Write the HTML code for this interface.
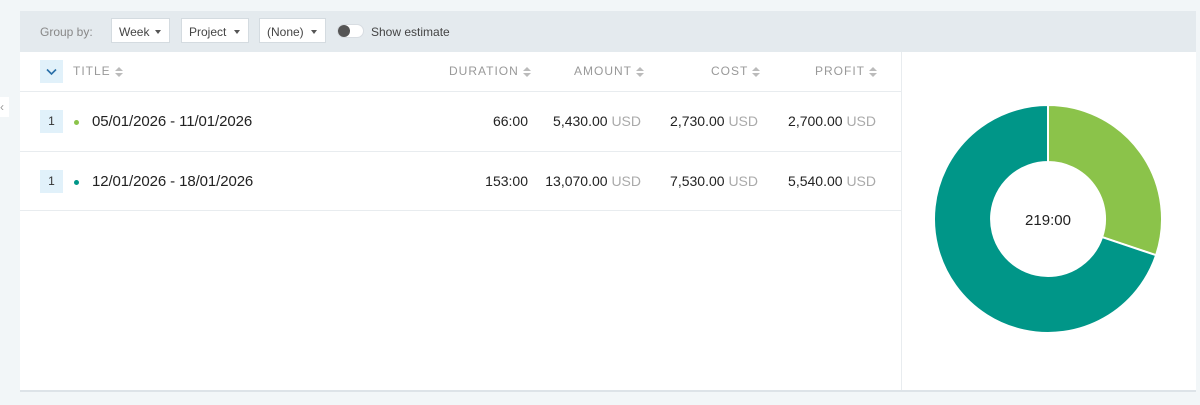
<!DOCTYPE html>
<html><head><meta charset="utf-8"><style>
*{box-sizing:border-box;margin:0;padding:0}
body{width:1200px;height:405px;background:#f2f6f8;font-family:"Liberation Sans",sans-serif;position:relative;overflow:hidden}
.card{position:absolute;left:20px;top:11px;width:1176px;height:381px;background:#fff;border-bottom:2px solid #dde3e8}
.bar{position:absolute;left:0;top:0;width:100%;height:41px;background:#e4eaee}
.a{position:absolute}
.lbl{font-size:12px;color:#888;left:20px;top:14px}
.sel{top:7px;height:25px;background:#fff;border:1px solid #d4dbe0;font-size:12px;color:#444;padding:6px 0 0 7px}
.sel i{position:absolute;right:8px;top:11px;width:0;height:0;border-left:3.5px solid transparent;border-right:3.5px solid transparent;border-top:4px solid #555}
.tog{left:317px;top:13px;width:27px;height:14px;border-radius:7px;background:#fff;border:1px solid #d8dde2}
.tog b{position:absolute;left:0px;top:0px;width:12px;height:12px;border-radius:50%;background:#555}
.th{font-size:12px;color:#999;letter-spacing:1px;top:53px}
.s{display:inline-block;width:8px;height:10px;vertical-align:middle;margin-left:4px;position:relative}
.s:before,.s:after{content:"";position:absolute;left:0px;border-left:4px solid transparent;border-right:4px solid transparent}
.s:before{top:0;border-bottom:4px solid #bbb}
.s:after{bottom:0;border-top:4px solid #bbb}
.hl{position:absolute;left:0;width:881px;height:1px;background:#e8ecef}
.badge{left:20px;width:23px;height:23px;background:#e1f1fa;font-size:12px;color:#333;text-align:center;line-height:23px}
.dot{left:54px;width:5px;height:5px;border-radius:50%}
.t{font-size:15px;color:#222;left:72px;letter-spacing:-0.1px}
.n{font-size:14px;color:#222;text-align:right}
.n span{color:#aaa}
</style></head><body>
<div class="a" style="left:0;top:97px;width:9px;height:20px;background:#fff;font-size:12px;color:#999;line-height:20px">‹</div>
<div class="card">
<div class="bar">
<div class="a lbl">Group by:</div>
<div class="a sel" style="left:91px;width:59px">Week<i></i></div>
<div class="a sel" style="left:161px;width:68px">Project<i></i></div>
<div class="a sel" style="left:239px;width:67px">(None)<i></i></div>
<div class="a tog"><b></b></div>
<div class="a" style="left:351px;top:14px;font-size:12px;color:#444">Show estimate</div>
</div>
<div class="a" style="left:20px;top:49px;width:23px;height:23px;background:#e1f1fa"><svg width="23" height="23"><path d="M7 9.5l4.5 4.5 4.5-4.5" fill="none" stroke="#2a6fa8" stroke-width="1.6"/></svg></div>
<div class="a th" style="left:53px">TITLE<span class="s"></span></div>
<div class="a th" style="left:429px">DURATION<span class="s"></span></div>
<div class="a th" style="left:554px">AMOUNT<span class="s"></span></div>
<div class="a th" style="left:691px">COST<span class="s"></span></div>
<div class="a th" style="left:795px">PROFIT<span class="s"></span></div>
<div class="hl" style="top:80px"></div>
<div class="hl" style="top:140px"></div>
<div class="hl" style="top:199px"></div>
<div class="a" style="left:881px;top:41px;width:1px;height:338px;background:#e8ecef"></div>
<div class="a badge" style="top:99px">1</div>
<div class="a dot" style="top:109px;background:#8bc34a"></div>
<div class="a t" style="top:102px">05/01/2026 - 11/01/2026</div>
<div class="a n" style="right:668px;top:102px">66:00</div>
<div class="a n" style="right:555px;top:102px">5,430.00 <span>USD</span></div>
<div class="a n" style="right:438px;top:102px">2,730.00 <span>USD</span></div>
<div class="a n" style="right:320px;top:102px">2,700.00 <span>USD</span></div>
<div class="a badge" style="top:159px">1</div>
<div class="a dot" style="top:169px;background:#009688"></div>
<div class="a t" style="top:162px">12/01/2026 - 18/01/2026</div>
<div class="a n" style="right:668px;top:162px">153:00</div>
<div class="a n" style="right:555px;top:162px">13,070.00 <span>USD</span></div>
<div class="a n" style="right:438px;top:162px">7,530.00 <span>USD</span></div>
<div class="a n" style="right:320px;top:162px">5,540.00 <span>USD</span></div>
</div>
<svg class="a" style="left:0;top:0" width="1200" height="405">
<path d="M1048 105 A114 114 0 0 1 1156.1 255.2 L1102.1 237.1 A57 57 0 0 0 1048 162 Z" fill="#8bc34a" stroke="#fff" stroke-width="2"/>
<path d="M1156.1 255.2 A114 114 0 1 1 1048 105 L1048 162 A57 57 0 1 0 1102.1 237.1 Z" fill="#009688" stroke="#fff" stroke-width="2"/>
<text x="1048" y="225" text-anchor="middle" font-family="Liberation Sans" font-size="15" fill="#222">219:00</text>
</svg>
</body></html>
